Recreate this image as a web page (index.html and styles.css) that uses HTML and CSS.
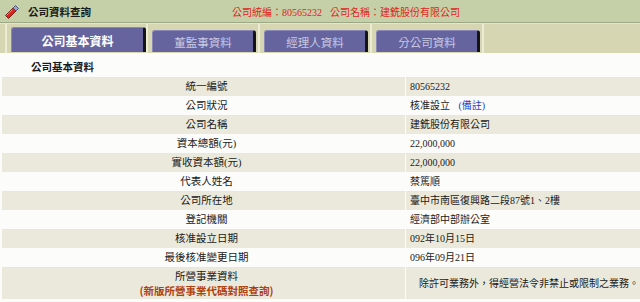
FILE: index.html
```html
<!DOCTYPE html>
<html lang="zh-Hant">
<head>
<meta charset="utf-8">
<title>公司資料查詢</title>
<link rel="stylesheet" href="styles.css">
</head>
<body>
<div class="page">
  <header class="topbar">
    <span class="icon">
      <svg width="16" height="16" viewBox="0 0 16 16">
        <path d="M2.5 12.5 L10 5 L13 8 L5.5 15.5 Z" fill="#d8251c" stroke="#5a1010" stroke-width="0.8"/>
        <path d="M10 5 L12.5 2.5 L15.5 5.5 L13 8 Z" fill="#9aa4c8" stroke="#3c4470" stroke-width="0.8"/>
        <path d="M3.5 12.5 L9.5 6.5" stroke="#f08a80" stroke-width="1"/>
      </svg>
    </span>
    <span class="title">公司資料查詢</span>
    <span class="info">公司統編：80565232</span>
    <span class="info info-name">公司名稱：建銑股份有限公司</span>
  </header>

  <nav class="tabstrip">
    <div class="cell cell-edge"></div>
    <div class="cell cell-1"><a class="tab tab-active">公司基本資料</a></div>
    <div class="cell cell-2"><a class="tab">董監事資料</a></div>
    <div class="cell cell-3"><a class="tab">經理人資料</a></div>
    <div class="cell cell-4"><a class="tab">分公司資料</a></div>
    <div class="cell cell-rest"></div>
  </nav>

  <h2 class="section-title">公司基本資料</h2>

  <div class="table">
    <div class="lbl shade">統一編號</div><div class="val shade">80565232</div>
    <div class="lbl">公司狀況</div><div class="val">核准設立 <a class="note">(備註)</a></div>
    <div class="lbl shade">公司名稱</div><div class="val shade">建銑股份有限公司</div>
    <div class="lbl">資本總額(元)</div><div class="val">22,000,000</div>
    <div class="lbl shade">實收資本額(元)</div><div class="val shade">22,000,000</div>
    <div class="lbl">代表人姓名</div><div class="val">蔡篤順</div>
    <div class="lbl shade">公司所在地</div><div class="val shade">臺中市南區復興路二段87號1、2樓</div>
    <div class="lbl">登記機關</div><div class="val">經濟部中部辦公室</div>
    <div class="lbl shade">核准設立日期</div><div class="val shade">092年10月15日</div>
    <div class="lbl">最後核准變更日期</div><div class="val">096年09月21日</div>
    <div class="lbl shade tall">所營事業資料<br><a class="lookup">(新版所營事業代碼對照查詢)</a></div>
    <div class="val shade tall biz">除許可業務外，得經營法令非禁止或限制之業務。</div>
  </div>
</div>
</body>
</html>
```

FILE: styles.css
```css
* { box-sizing: border-box; }
html, body { margin: 0; padding: 0; background: #fcfcfa; }
body {
  font-family: "Liberation Serif", "Noto Sans CJK TC", serif;
  font-size: 10px;
  color: #1a1a1a;
  width: 640px;
  height: 302px;
  overflow: hidden;
}

.topbar {
  height: 23px;
  background: #c5cfa8;
  border-bottom: 1px solid #9ea885;
  display: flex;
  align-items: center;
}
.icon { width: 16px; height: 16px; margin-left: 3px; display: block; }
.icon svg { display: block; }
.title {
  font-family: "Noto Sans CJK TC", sans-serif;
  font-weight: bold;
  font-size: 10.5px;
  margin-left: 9px;
  width: 204px;
}
.info {
  color: #e3231c;
  font-size: 10px;
}
.info-name { margin-left: 8px; }

.tabstrip {
  height: 30px;
  background: #d6d6b2;
  display: flex;
  border-top: 1px solid #e4e6c8;
}
.cell {
  height: 100%;
  border-right: 2px solid #ecebd3;
  display: flex;
  align-items: flex-end;
  padding-bottom: 1px;
}
.cell-edge { width: 7px; }
.cell-1 { width: 141px; padding-left: 4px; }
.cell-2 { width: 112px; padding-left: 4px; }
.cell-3 { width: 112px; padding-left: 4px; }
.cell-4 { width: 112px; padding-left: 4px; }
.cell-rest { flex: 1; border-right: none; }

.tab {
  display: flex;
  align-items: center;
  justify-content: center;
  height: 22px;
  width: 104px;
  background: #66649f;
  border-right: 3px solid #141414;
  border-top: 1px solid #8a88b8;
  border-left: 1px solid #8a88b8;
  border-radius: 3px 3px 0 0;
  color: #c9c9e2;
  font-family: "Noto Sans CJK TC", sans-serif;
  font-size: 11.5px;
  padding-top: 1px;
}
.tab-active {
  width: 135px;
  height: 25px;
  color: #ffffff;
  font-weight: bold;
  font-size: 12px;
}

.section-title {
  margin: 0;
  height: 24px;
  padding: 4px 0 0 31px;
  line-height: 20px;
  font-family: "Noto Sans CJK TC", sans-serif;
  font-size: 10.5px;
  font-weight: bold;
}

.table {
  display: grid;
  grid-template-columns: 403px 1fr;
  column-gap: 1px;
  padding-left: 2px;
}
.lbl, .val {
  height: 19px;
  line-height: 19px;
  white-space: nowrap;
}
.lbl { text-align: center; padding-left: 6px; font-size: 10.5px; }
.val { padding-left: 4px; font-size: 10px; }
.shade { background: #ebe9dc; border-top: 1px solid #e3eadb; line-height: 18px; }
.note { color: #1e3ccc; margin-left: 6px; }
.tall {
  height: 32px;
  line-height: 14px;
  padding-top: 2px;
}
.lookup {
  color: #b0400e;
  font-weight: bold;
  font-family: "Noto Sans CJK TC", sans-serif;
  font-size: 10.5px;
}
.biz {
  display: flex;
  align-items: center;
  padding-left: 13px;
  padding-top: 0;
  font-size: 10px;
}
```
